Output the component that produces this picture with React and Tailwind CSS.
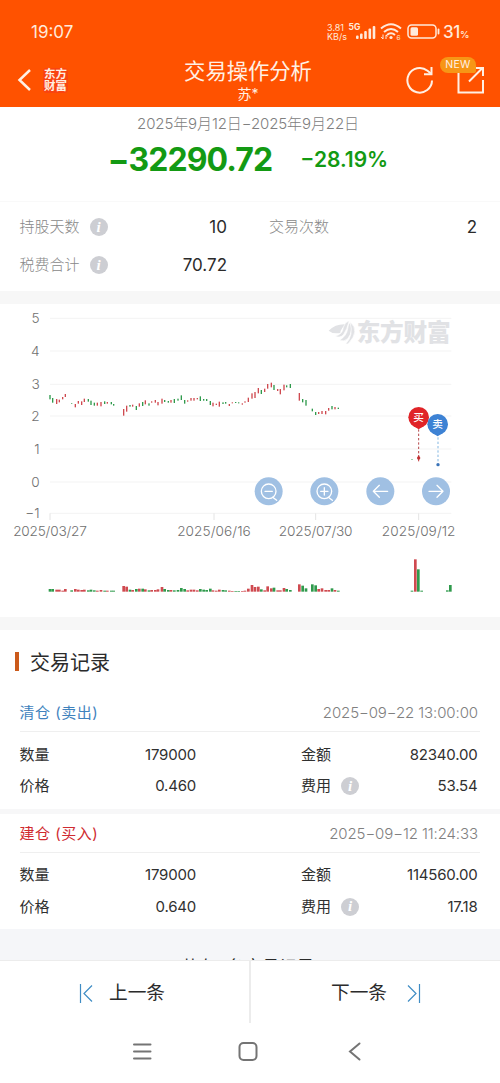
const RED = '#cf4a50'
const GREEN = '#2f9a4c'

// [x, high, low, direction, volume]
const candles = [
  [150, 285, 298, 'd', 8], [158, 294, 308, 'd', 8], [170, 297, 312, 'u', 6], [178, 299, 307, 'u', 6],
  [188, 291, 298, 'u', 3], [196, 282, 291, 'u', 8], [215, 309, 311, 'd', 4], [226, 312, 322, 'u', 8],
  [235, 303, 311, 'u', 6], [245, 304, 315, 'u', 5], [253, 296, 306, 'u', 6], [265, 297, 305, 'd', 4],
  [273, 302, 315, 'd', 6], [283, 308, 317, 'd', 4], [292, 308, 317, 'u', 3], [303, 306, 319, 'u', 5],
  [314, 304, 312, 'd', 3], [322, 306, 311, 'u', 3], [334, 306, 313, 'd', 3], [341, 312, 317, 'd', 3],
  [371, 327, 347, 'u', 17], [380, 317, 335, 'u', 15], [390, 315, 320, 'd', 6], [398, 314, 320, 'u', 5],
  [409, 318, 330, 'd', 8], [418, 310, 320, 'u', 9], [428, 306, 318, 'd', 9], [436, 301, 313, 'u', 7],
  [447, 310, 317, 'd', 4], [455, 304, 308, 'u', 5], [466, 300, 308, 'u', 5], [474, 306, 316, 'u', 7],
  [486, 296, 311, 'u', 14], [494, 300, 306, 'd', 8], [505, 303, 308, 'd', 5], [513, 300, 308, 'u', 5],
  [523, 297, 309, 'd', 4], [534, 296, 302, 'd', 5], [544, 286, 300, 'd', 11], [554, 300, 311, 'd', 8],
  [563, 301, 305, 'u', 4], [573, 294, 302, 'u', 6], [582, 294, 302, 'u', 6], [592, 294, 298, 'u', 4],
  [601, 289, 303, 'd', 8], [611, 297, 302, 'd', 6], [620, 297, 303, 'd', 5], [631, 303, 315, 'd', 9],
  [639, 308, 319, 'u', 4], [649, 311, 315, 'u', 3], [658, 305, 320, 'u', 6], [669, 307, 312, 'd', 5],
  [677, 306, 311, 'd', 4], [688, 312, 318, 'u', 3], [697, 307, 310, 'u', 2], [707, 306, 309, 'd', 2],
  [716, 307, 310, 'd', 2], [727, 310, 314, 'u', 2], [735, 304, 308, 'u', 3], [745, 293, 306, 'u', 9],
  [756, 280, 296, 'u', 20], [765, 276, 294, 'u', 14], [775, 264, 280, 'u', 15], [784, 270, 282, 'd', 7],
  [794, 266, 276, 'u', 4], [803, 252, 266, 'u', 16], [814, 248, 262, 'u', 10], [822, 255, 270, 'd', 12],
  [833, 267, 273, 'u', 4], [841, 267, 283, 'u', 4], [852, 254, 271, 'u', 11], [860, 256, 262, 'd', 8],
  [871, 252, 264, 'd', 5], [898, 279, 302, 'u', 22], [908, 297, 307, 'd', 18], [918, 300, 317, 'd', 10],
  [937, 326, 334, 'd', 22], [947, 336, 345, 'd', 19], [956, 336, 342, 'u', 8], [966, 333, 342, 'u', 10],
  [977, 333, 343, 'u', 5], [986, 324, 332, 'u', 5], [996, 318, 328, 'd', 10], [1005, 321, 328, 'u', 5],
  [1015, 323, 327, 'd', 3], [1236, 478, 480, 'd', 3], [1246, 0, 0, 'u', 97], [1255, 0, 0, 'd', 67],
  [1265, 0, 0, 'd', 3], [1342, 0, 0, 'd', 4], [1351, 0, 0, 'd', 20],
]

const yTicks = [
  ['5', 55], ['4', 153], ['3', 253], ['2', 348], ['1', 447], ['0', 546], ['−1', 640],
]

const xTicks = [
  ['2025/03/27', 150], ['2025/06/16', 642], ['2025/07/30', 947], ['2025/09/12', 1256],
]

const records = [
  {
    title: '清仓 (卖出)', color: 'text-[#3f82bd]', time: '2025-09-22 13:00:00',
    quantity: '179000', amount: '82340.00', price: '0.460', fee: '53.54',
  },
  {
    title: '建仓 (买入)', color: 'text-[#cf2b31]', time: '2025-09-12 11:24:33',
    quantity: '179000', amount: '114560.00', price: '0.640', fee: '17.18',
  },
]

function Info() {
  return (
    <span className="flex size-[18px] shrink-0 items-center justify-center rounded-full bg-[#cdced3] font-['Liberation_Serif',serif] text-[15px] leading-none font-bold text-white italic">
      i
    </span>
  )
}

function StatusBar() {
  return (
    <div className="flex h-12 items-end justify-between pr-[31px] pl-[31px] text-[#ffeadb]">
      <span className="h-[27px] text-[17px] leading-[22px]">19:07</span>
      <div className="flex h-[27px] items-start">
        <div className="w-[21px] pt-[2px] text-[9px] leading-[9px]">
          <div>3.81</div>
          <div>KB/s</div>
        </div>
        <svg className="h-[20px] w-[30px]" viewBox="0 0 30 20" fill="currentColor">
          <text x="0.500" y="9" fontSize="8.500" fontWeight="700">5G</text>
          <rect x="8" y="14.500" width="2.600" height="3.500" rx="1" />
          <rect x="12" y="12.500" width="2.600" height="5.500" rx="1" />
          <rect x="16.200" y="10" width="2.600" height="8" rx="1" />
          <rect x="20.500" y="7.500" width="2.600" height="10.500" rx="1" />
          <rect x="24.700" y="5" width="2.600" height="13" rx="1" />
        </svg>
        <svg className="ml-[2px] h-[20px] w-[22px]" viewBox="0 0 22 20" fill="none" stroke="currentColor" strokeWidth="2">
          <path d="M1 7.500Q11 -1 21 7.500M4 11Q11 5 18 11M7 14Q11 10.500 15 14" />
          <circle cx="11" cy="16.500" r="1.600" fill="currentColor" stroke="none" />
          <path d="M3 13.500v4.500M1.200 16L3 18M6 18v-4M6 14l1.500 1.500" strokeWidth="1" />
          <text x="16.500" y="19" fontSize="6.500" fill="currentColor" stroke="none">6</text>
        </svg>
        <svg className="ml-[5px] h-[20px] w-[34px]" viewBox="0 0 34 20" fill="none" stroke="currentColor">
          <rect x="1" y="4" width="28" height="13" rx="3.500" strokeWidth="1.500" />
          <rect x="3.500" y="6.200" width="7.500" height="8.600" rx="1.500" fill="currentColor" stroke="none" />
          <path d="M31.500 8.500v4" strokeWidth="1.800" strokeLinecap="round" />
        </svg>
        <span className="ml-[2px] text-[17px] leading-[22px] font-medium tracking-[-0.4px] whitespace-nowrap">
          31<span className="text-[9.5px]">%</span>
        </span>
      </div>
    </div>
  )
}

function Header() {
  return (
    <header className="h-[107px] bg-[#ff5200] text-[#fff0e4]">
      <StatusBar />
      <div className="relative flex h-[59px] items-center justify-between pr-[15px] pl-[17px]">
        <div className="flex items-center pt-[5px]">
          <svg className="h-[24px] w-[15px]" viewBox="0 0 15 24" fill="none" stroke="currentColor" strokeWidth="2.500">
            <path d="M13 2L2.500 12L13 22" />
          </svg>
          <div className="ml-[11px] flex h-[25px] w-[25px] flex-col items-center justify-center rounded bg-[#f94410] text-[11.5px] leading-[12px] font-bold whitespace-nowrap">
            <span>东方</span>
            <span>财富</span>
          </div>
        </div>
        <div className="absolute inset-x-0 top-0 flex flex-col items-center pr-1">
          <h1 className="pt-[8px] text-[21.3px] leading-[30px]">交易操作分析</h1>
          <span className="text-[14px] leading-[16px]">苏*</span>
        </div>
        <div className="flex items-center pt-[4px]">
          <svg className="h-[30px] w-[30px]" viewBox="0 0 30 30" fill="none" stroke="currentColor" strokeWidth="2">
            <path d="M27 15.500A12.300 12.300 0 1 1 22.500 5.800L26.500 9" />
            <path d="M26.500 2v7.200H19" />
          </svg>
          <div className="relative ml-[21px] h-[30px] w-[29px]">
            <svg className="h-[30px] w-[29px]" viewBox="0 0 29 30" fill="none" stroke="currentColor" strokeWidth="2">
              <path d="M2.500 8v19.500h24.500V15M13 16.500L26 3.500M19 3h8v8" />
            </svg>
            <span className="absolute -top-[8px] -left-[16px] flex h-[16px] w-[36px] items-center justify-center rounded-[8px] rounded-br-[2px] bg-[#f79616] text-[10.5px] tracking-[0.3px]">
              NEW
            </span>
          </div>
        </div>
      </div>
    </header>
  )
}

function Stat({ label, value, info }) {
  return (
    <div className="flex h-[38px] items-center text-[15px] text-[#888888]">
      <span className="font-light">{label}</span>
      {info && <span className="ml-[10px]"><Info /></span>}
      <span className="ml-auto pt-px text-[17px] text-[#2b2b2b]">{value}</span>
    </div>
  )
}

function Summary() {
  return (
    <section className="h-[184px]">
      <p className="h-[33px] pr-1 text-center text-[15px] leading-[34px] font-light tracking-[-0.1px] text-[#808080]">
        2025年9月12日−2025年9月22日
      </p>
      <div className="flex h-[62px] items-start justify-center gap-[28px] border-b border-[#f9f9f9] pr-1 font-bold text-[#139a13]">
        <span className="text-[32px] leading-[40px] tracking-[-0.9px]">−32290.72</span>
        <span className="text-[21px] leading-[40px] font-semibold">−28.19%</span>
      </div>
      <div className="grid grid-cols-[207.5px_208px] gap-x-[42px] pt-[6px] pl-[19.5px]">
        <Stat label="持股天数" value="10" info />
        <Stat label="交易次数" value="2" />
        <Stat label="税费合计" value="70.72" info />
      </div>
    </section>
  )
}

function Pin({ x, y, fill, label }) {
  return (
    <g>
      <path d={`M${x - 16} ${y + 26}L${x} ${y + 36}L${x + 16} ${y + 26}Z`} fill={fill} />
      <circle cx={x} cy={y} r="31" fill={fill} />
      <text x={x} y={y + 12} fontSize="32" fontWeight="500" textAnchor="middle" fill="#fff">{label}</text>
    </g>
  )
}

function Chart() {
  return (
    <svg className="block h-[313px] w-full" viewBox="0 12 1500 939">
      <g stroke="#f3f3f3" strokeWidth="3">
        {yTicks.map(([label, y]) => <path key={label} d={`M150 ${y}H1354`} />)}
        {xTicks.map(([label, x]) => <path key={label} d={`M${x} 640v20`} stroke="#e4e4e4" />)}
      </g>
      <g fontSize="41" fontWeight="300" fill="#707070">
        {yTicks.map(([label, y]) => (
          <text key={label} x="119" y={y + 14} textAnchor="end">{label}</text>
        ))}
        {xTicks.map(([label, x]) => (
          <text key={label} x={x} y="709" textAnchor="middle" textLength="221">{label}</text>
        ))}
      </g>

      {/* Watermark */}
      <g fill="#e1e2e5">
        <path d="M986 92Q1008 70 1040 73Q1022 84 1021 99Q998 103 986 92Z" />
        <path d="M1005 108Q1028 104 1030 82Q1034 66 1048 62Q1042 87 1030 105Q1018 116 1005 108Z" stroke="#fff" strokeWidth="2" />
        <path d="M1019 120Q1040 108 1043 86Q1044 71 1052 65Q1062 91 1043 116Q1032 127 1019 120Z" stroke="#fff" strokeWidth="2" />
        <path d="M1037 132Q1062 106 1050 66Q1082 92 1044 132Z" stroke="#fff" strokeWidth="2" />
        <text x="1070" y="124" fontSize="71" fontWeight="900" textLength="282">东方财富</text>
      </g>

      {candles.map(([x, high, low, dir, volume]) => (
        <g key={x} fill={dir === 'u' ? RED : GREEN}>
          <rect x={x - 2} y={high} width="4" height={low - high} />
          <rect x={x - 4} y={875 - volume} width="8" height={volume} />
        </g>
      ))}

      <path d="M1256 388V474" stroke="#b5484a" strokeWidth="3" strokeDasharray="7 6" />
      <circle cx="1256" cy="474" r="5" fill="#c23335" />
      <path d="M1256 466v18" stroke="#c23335" strokeWidth="3" />
      <path d="M1314 412V488" stroke="#83b7e2" strokeWidth="3" strokeDasharray="7 6" />
      <circle cx="1314" cy="494" r="5" fill="#3a73b8" />
      <Pin x={1256} y={352} fill="#e02428" label="买" />
      <Pin x={1313} y={373} fill="#3d82d4" label="卖" />

      {/* Zoom and pan buttons */}
      <g fill="#a0c0e3">
        <circle cx="806" cy="574" r="42" />
        <circle cx="973" cy="574" r="42" />
        <circle cx="1141" cy="574" r="42" />
        <circle cx="1308" cy="574" r="42" />
      </g>
      <g fill="none" stroke="#fff" strokeWidth="4" strokeLinecap="round" strokeLinejoin="round">
        <path d="M795 574h22M818 592l12 9" />
        <circle cx="806" cy="574" r="22" />
        <path d="M962 574h22M973 563v22M985 592l12 9" />
        <circle cx="973" cy="574" r="22" />
        <path d="M1163 574h-42M1138 556l-18 18l18 18" />
        <path d="M1287 574h42M1311 556l18 18l-18 18" />
      </g>
    </svg>
  )
}

function Field({ label, value, info }) {
  return (
    <div className="flex h-[31.5px] items-center">
      <span>{label}</span>
      {info && <span className="ml-[10px]"><Info /></span>}
      <span className="ml-auto tracking-[-0.2px]">{value}</span>
    </div>
  )
}

function RecordCard({ record }) {
  return (
    <article className="h-[115.5px] bg-white pr-[20px] pl-[19.5px] text-[15px] text-[#303030]">
      <div className="flex h-[39px] items-center justify-between border-b border-[#efefef] pt-[3px] pr-[2px]">
        <span className={`tracking-[0.5px] ${record.color}`}>{record.title}</span>
        <span className="font-light tracking-[-0.1px] text-[#808080]">{record.time.replaceAll('-', '−')}</span>
      </div>
      <div className="grid grid-cols-[176.5px_176.5px] gap-x-[105px] pt-[7px]">
        <Field label="数量" value={record.quantity} />
        <Field label="金额" value={record.amount} />
        <Field label="价格" value={record.price} />
        <Field label="费用" value={record.fee} info />
      </div>
    </article>
  )
}

function Footer() {
  return (
    <footer className="bg-white">
      <div className="flex h-[63px] border-t border-[#ececec] text-[18.7px] text-[#2b2b2b]">
        <button className="flex w-[249px] items-center pt-[2px] pl-[79px]">
          <svg className="mr-[16px] h-[19px] w-[14px]" viewBox="0 0 14 19" fill="none" stroke="#3f8cc4" strokeWidth="1.200">
            <path d="M1.500 0v19M13 1.500L5 9.500L13 17.500" />
          </svg>
          <span className="pt-px">上一条</span>
        </button>
        <button className="flex flex-1 items-center border-l-2 border-[#ececec] pt-[2px] pl-[80px]">
          <span className="pt-px">下一条</span>
          <svg className="ml-[20px] h-[19px] w-[14px]" viewBox="0 0 14 19" fill="none" stroke="#3f8cc4" strokeWidth="1.200">
            <path d="M12.500 0v19M1 1.500L9 9.500L1 17.500" />
          </svg>
        </button>
      </div>
      <nav className="flex h-[60px] justify-center">
        <svg className="h-[60px] w-[500px]" viewBox="0 0 500 60" fill="none" stroke="#747474" strokeWidth="2" strokeLinecap="round">
          <path d="M134 21.500h16.500M134 28.500h16.500M134 35.500h16.500" />
          <rect x="239.500" y="20" width="17" height="17" rx="4" />
          <path d="M359.500 20.500L350 28.500L359.500 36.500" />
        </svg>
      </nav>
    </footer>
  )
}

export default function App() {
  return (
    <div className="h-[1083px] w-[500px] overflow-hidden bg-white font-['Inter','Noto_Sans_CJK_SC',sans-serif]">
      <Header />
      <Summary />
      <div className="h-[13px] bg-[#f7f7f7]" />
      <Chart />
      <div className="h-[13px] bg-[#f7f7f7]" />
      <section className="bg-[#f7f7f8]">
        <div className="flex h-[63px] items-center bg-white pl-[15px]">
          <span className="h-[19px] w-[4px] bg-[#cb5a1b]" />
          <h2 className="ml-[11px] pt-[2px] text-[20px] text-[#2b2b2b]">交易记录</h2>
        </div>
        <div className="flex flex-col gap-[5px]">
          {records.map(record => <RecordCard key={record.time} record={record} />)}
        </div>
      </section>
      <div className="h-[31px] overflow-hidden bg-[#f5f6f9] pt-[25px] pr-1 text-center text-[17px] leading-[26px] tracking-[0.5px] text-[#2b2b2b]">
        共有2条交易记录
      </div>
      <Footer />
    </div>
  )
}
